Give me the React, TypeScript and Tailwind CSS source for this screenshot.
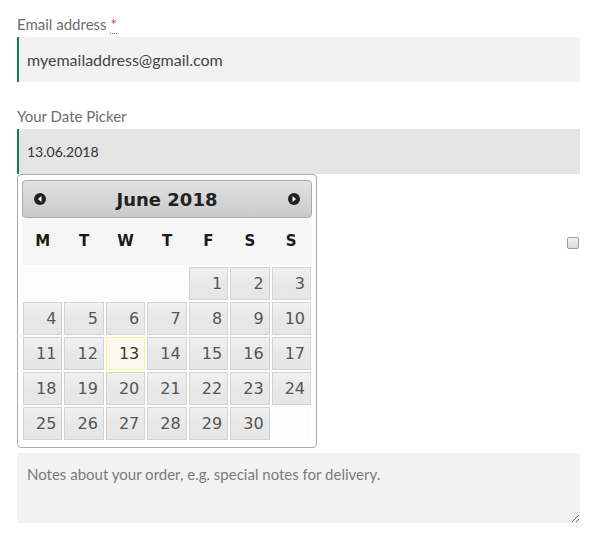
import { useState } from "react";

const days = Array.from({ length: 30 }, (_, i) => i + 1);
const weekDays = ["M", "T", "W", "T", "F", "S", "S"];

const NavIcon = ({ dir }: { dir: "prev" | "next" }) => (
  <svg width="12" height="12" viewBox="0 0 12 12">
    <circle cx="6" cy="6" r="6" fill="#222" />
    {dir === "prev" ? (
      <path d="M7.5 3 L4 6 L7.5 9 Z" fill="#fff" />
    ) : (
      <path d="M4.5 3 L8 6 L4.5 9 Z" fill="#fff" />
    )}
  </svg>
);

const App = () => {
  const [email, setEmail] = useState("myemailaddress@gmail.com");
  const [date, setDate] = useState("13.06.2018");
  const [notes, setNotes] = useState("");

  return (
    <div className="w-[597px] h-[539px] bg-white px-[17px] pt-[14px] font-['Lato',sans-serif] text-[15px]">
      <div className="w-[563px]">
        <label className="block h-[23px] leading-[20px] text-[#6d6d6d]">
          Email address{" "}
          <abbr className="text-[#e2401c] no-underline border-b border-dotted border-[#e2401c]">*</abbr>
        </label>
        <input
          value={email}
          onChange={(e) => setEmail(e.target.value)}
          className="block w-full h-[45px] bg-[#f2f2f2] border-l-2 border-[#0f834d] pl-[8px] text-[16px] text-[#43454b] outline-none"
        />

        <label className="block mt-[24px] h-[23px] leading-[20px] text-[#6d6d6d]">Your Date Picker</label>
        <div className="relative">
          <input
            value={date}
            onChange={(e) => setDate(e.target.value)}
            className="block w-full h-[45px] bg-[#e4e4e4] border-l-2 border-[#0f834d] pl-[8px] text-[14px] text-[#333] outline-none"
          />

          {/* datepicker popup */}
          <div className="absolute z-10 left-0 top-full w-[300px] h-[274px] bg-white border border-[#aaa] rounded-[4px] px-[4px] pt-[5px] font-['DejaVu_Sans',sans-serif]">
            <div className="h-[38px] flex items-center justify-between px-[11px] rounded-[4px] border border-[#aaa] bg-gradient-to-b from-[#e2e2e2] to-[#cacaca]">
              <NavIcon dir="prev" />
              <span className="text-[18px] font-bold text-[#222]">June 2018</span>
              <NavIcon dir="next" />
            </div>
            <div className="h-[47px] grid grid-cols-7 items-center bg-[#f6f6f6] text-[15px] font-bold text-[#1a1a1a]">
              {weekDays.map((d, i) => (
                <span key={i} className="text-center">
                  {d}
                </span>
              ))}
            </div>
            <div className="grid grid-cols-7 gap-[2px] pt-[2px] px-[1px]">
              <span className="col-span-4 h-[33px] bg-[#fcfcfc]" />
              {days.map((d) =>
                d === 13 ? (
                  <span
                    key={d}
                    className="h-[33px] flex items-center justify-end pr-[5px] border border-[#fcefa1] bg-[#fbf9ee] text-[16px] text-[#363636]"
                  >
                    {d}
                  </span>
                ) : (
                  <span
                    key={d}
                    className="h-[33px] flex items-center justify-end pr-[5px] border border-[#d3d3d3] bg-gradient-to-b from-[#f0f0f0] via-[#e8e8e8] to-[#e6e6e6] text-[16px] text-[#555]"
                  >
                    {d}
                  </span>
                )
              )}
              <span className="h-[33px] bg-[#fcfcfc]" />
            </div>
          </div>
        </div>

        <div className="h-[279px] flex justify-end pt-[63px]">
          <span className="w-[12px] h-[12px] mr-[1px] rounded-[2px] border border-[#9a9a9a] bg-gradient-to-b from-[#f4f4f4] to-[#dcdcdc]" />
        </div>

        <textarea
          value={notes}
          onChange={(e) => setNotes(e.target.value)}
          placeholder="Notes about your order, e.g. special notes for delivery."
          className="block w-full h-[70px] bg-[#f2f2f2] px-[10px] pt-[10px] text-[15px] text-[#43454b] placeholder:text-[#7b7b7b] outline-none"
        />
      </div>
    </div>
  );
};

export default App;
